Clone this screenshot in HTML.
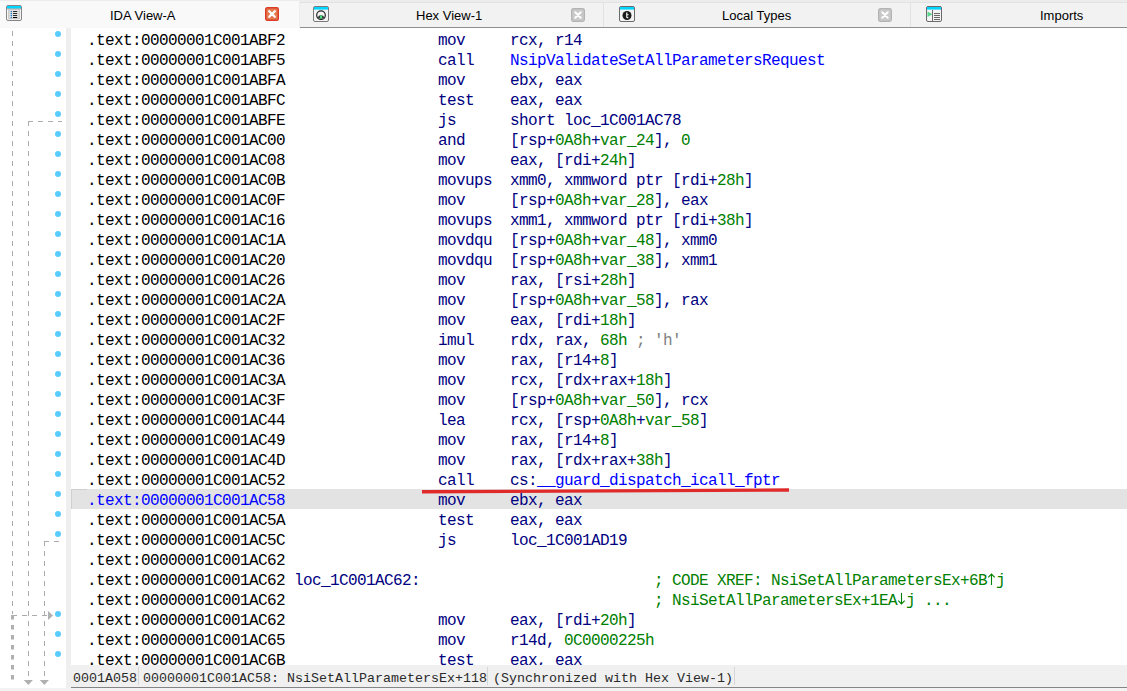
<!DOCTYPE html>
<html><head><meta charset="utf-8">
<style>
html,body{margin:0;padding:0;}
body{width:1127px;height:691px;position:relative;overflow:hidden;background:#fff;font-family:"Liberation Sans",sans-serif;}
.abs{position:absolute;}
#tabbar{position:absolute;left:0;top:0;width:1127px;height:28px;background:#ececec;}
.tab{position:absolute;top:2px;height:24px;background:#f2f2f2;border-top:1px solid #e2e2e2;border-bottom:1px solid #fafafa;}
.tab.sep{border-left:1px solid #e2e2e2;}
#tabline{position:absolute;left:0;top:27px;width:1127px;height:1px;background:#8e8e8e;}
#acttab{position:absolute;left:0;top:1px;width:299px;height:27px;background:#f9f9f9;border-right:1px solid #ededed;}
.tl{position:absolute;top:8px;font-size:13px;color:#000;line-height:16px;white-space:nowrap;}
#gutter{position:absolute;left:0;top:28px;width:66px;height:660px;background:#fff;}
#strip{position:absolute;left:66px;top:28px;width:5px;height:660px;background:#efefef;}
#code{position:absolute;left:71px;top:0;width:1056px;height:665px;overflow:hidden;}
.row{position:absolute;left:0;width:1056px;height:20px;font-family:"Liberation Mono",monospace;font-size:16px;letter-spacing:-0.6px;line-height:20px;white-space:pre;}
.row span{position:absolute;top:2px;}
.row.hl{background:#e3e3e3;box-shadow:inset 1px 0 0 #cfcfcf;}
.row.hl::before{content:"";position:absolute;left:0;top:0;width:16px;height:1px;background:#cfcfcf;}
.ad{color:#000;}
.hl .ad{color:#0000ff;}
.mn,.op,.lb{color:#000080;}
.row span.g,.row .op span.g{color:#008000;position:static;}
.row .op span.b{color:#0000ff;position:static;}
.row .op span.y{color:#808080;position:static;}
.row > span.g{position:absolute;}
.dot{position:absolute;left:55px;width:6px;height:6px;border-radius:50%;background:#5acbfd;}
#status{position:absolute;left:71px;top:665px;width:1056px;height:22px;background:#f0f0f0;border-bottom:1px solid #858585;font-family:"Liberation Mono",monospace;font-size:13.33px;color:#2a2a2a;}
#status span{position:absolute;top:5.5px;line-height:16px;white-space:pre;}
.ssep{position:absolute;top:2px;width:1px;height:18px;background:#d6d6d6;}
#bottom{position:absolute;left:0;top:688px;width:1127px;height:3px;background:#f3f3f3;}
#redline{position:absolute;left:422px;top:488px;width:368px;height:6px;}
</style></head><body>
<div id="tabbar">
  <div class="tab" style="left:299px;width:305px;"></div>
  <div class="tab sep" style="left:603px;width:307px;"></div>
  <div class="tab sep" style="left:910px;width:217px;"></div>
  <div id="tabline"></div>
  <div id="acttab"></div>
  <!-- tab1 icon -->
  <svg class="abs" style="left:6px;top:5px" width="16" height="16" viewBox="0 0 16 16">
    <rect x="0.5" y="0.5" width="15" height="15" rx="1.5" fill="#f6f6f6" stroke="#868686"/>
    <rect x="1" y="1" width="14" height="2.6" fill="#00d6ff"/>
    <rect x="1" y="3.6" width="14" height="0.6" fill="#8a8a8a"/>
    <rect x="2.3" y="4" width="11.5" height="10.2" fill="#bdbdbd"/>
    <rect x="3.3" y="4.8" width="9.5" height="8.6" fill="#e4e4e4"/>
    <g fill="#1b78c4"><circle cx="5.3" cy="6.5" r="0.8"/><circle cx="5.3" cy="8.5" r="0.8"/><circle cx="5.3" cy="10.5" r="0.8"/><circle cx="5.3" cy="12.5" r="0.8"/></g>
    <g fill="#2a2a2a"><rect x="7" y="6" width="4.2" height="1"/><rect x="7" y="8" width="4.2" height="1"/><rect x="7" y="10" width="4.2" height="1"/><rect x="7" y="12" width="4.2" height="1" fill="#000"/></g>
  </svg>
  <div class="tl" style="left:110px;">IDA View-A</div>
  <svg class="abs" style="left:265px;top:7px" width="14" height="14" viewBox="0 0 14 14">
    <rect x="0.7" y="0.7" width="12.6" height="12.6" rx="1.5" fill="#e57a50" stroke="#dc3a26" stroke-width="1.4"/>
    <path d="M4.2 4.2 L9.8 9.8 M9.8 4.2 L4.2 9.8" stroke="#fff" stroke-width="2.2" stroke-linecap="round"/>
  </svg>
  <!-- tab2 icon hex -->
  <svg class="abs" style="left:313px;top:6px" width="16" height="16" viewBox="0 0 16 16">
    <rect x="0.5" y="0.5" width="15" height="15" rx="1.5" fill="#f4f4f4" stroke="#7a7a7a"/>
    <rect x="1" y="1" width="14" height="2.6" fill="#00d4ff"/>
    <circle cx="8" cy="9.2" r="4.3" fill="none" stroke="#222" stroke-width="1.2"/>
    <path d="M4.8 11.2 Q8 14.5 11.2 11.2 L10 9.8 Q8 8.5 6 9.8 Z" fill="#222"/>
    <ellipse cx="8" cy="11" rx="1.3" ry="1.8" fill="#3ee07a"/>
  </svg>
  <div class="tl" style="left:416px;">Hex View-1</div>
  <svg class="abs" style="left:571px;top:8px" width="14" height="14" viewBox="0 0 14 14">
    <rect x="0.6" y="0.6" width="12.8" height="12.8" rx="1.8" fill="#c9c9c9" stroke="#b3b3b3" stroke-width="1.2"/>
    <path d="M4.3 4.3 L9.7 9.7 M9.7 4.3 L4.3 9.7" stroke="#fff" stroke-width="2" stroke-linecap="round"/>
  </svg>
  <!-- tab3 icon local types -->
  <svg class="abs" style="left:619px;top:6px" width="16" height="16" viewBox="0 0 16 16">
    <rect x="0.5" y="0.5" width="15" height="15" rx="1.5" fill="#f4f4f4" stroke="#6a6a6a"/>
    <rect x="1" y="1" width="14" height="2.6" fill="#00d4ff"/>
    <circle cx="8" cy="9.5" r="4.5" fill="#1a1a1a"/>
    <path d="M7.2 6.6 L8.4 6.6 L8.3 8.2 L9.6 8.2 L9.5 9.2 L8.3 9.2 L8.3 10.8 Q8.4 11.4 9.5 11.2 L9.4 12.2 Q7.2 12.6 7.2 11 Z" fill="#fff"/>
  </svg>
  <div class="tl" style="left:722px;">Local Types</div>
  <svg class="abs" style="left:878px;top:8px" width="14" height="14" viewBox="0 0 14 14">
    <rect x="0.6" y="0.6" width="12.8" height="12.8" rx="1.8" fill="#c9c9c9" stroke="#b3b3b3" stroke-width="1.2"/>
    <path d="M4.3 4.3 L9.7 9.7 M9.7 4.3 L4.3 9.7" stroke="#fff" stroke-width="2" stroke-linecap="round"/>
  </svg>
  <!-- tab4 icon imports -->
  <svg class="abs" style="left:926px;top:6px" width="16" height="16" viewBox="0 0 16 16">
    <rect x="0.5" y="0.5" width="15" height="15" rx="1.5" fill="#f4f4f4" stroke="#6a6a6a"/>
    <rect x="1" y="1" width="14" height="2.6" fill="#00d4ff"/>
    <rect x="6" y="4" width="1" height="11" fill="#6a6a6a"/>
    <path d="M1.5 5.5 L6.5 8.2 L1.5 11 Z" fill="#58d68d"/>
    <rect x="8" y="7" width="6" height="1" fill="#666"/>
    <rect x="8" y="9" width="6" height="1" fill="#666"/>
    <rect x="8" y="11" width="6" height="1" fill="#666"/>
    <rect x="8" y="13" width="6" height="1" fill="#666"/>
  </svg>
  <div class="tl" style="left:1040px;">Imports</div>
</div>
<div id="gutter"></div>
<svg class="abs" style="left:0;top:0" width="66" height="691">
  <g stroke="#ababab" stroke-width="1" fill="none" stroke-dasharray="5 5">
    <line x1="12.5" y1="31" x2="12.5" y2="614"/>
    <line x1="28.5" y1="121" x2="28.5" y2="678"/>
    <line x1="28" y1="121.5" x2="62" y2="121.5"/>
    <line x1="44.5" y1="541" x2="44.5" y2="678"/>
    <line x1="44" y1="541.5" x2="59" y2="541.5"/>
    <line x1="12" y1="615.5" x2="48" y2="615.5"/>
  </g>
  <line x1="12.5" y1="615" x2="12.5" y2="681" stroke="#b0b0b0" stroke-width="3" stroke-dasharray="4.6 5.4"/>
  <path d="M48 611 L53 615.5 L48 620 Z" fill="#b0b0b0"/>
  <path d="M23.8 680 L32.9 680 L28.35 685 Z" fill="#b0b0b0"/>
  <path d="M39.8 680 L48.9 680 L44.35 685 Z" fill="#b0b0b0"/>
</svg>
<div class="dot" style="top:31px"></div><div class="dot" style="top:51px"></div><div class="dot" style="top:71px"></div><div class="dot" style="top:91px"></div><div class="dot" style="top:111px"></div><div class="dot" style="top:131px"></div><div class="dot" style="top:151px"></div><div class="dot" style="top:171px"></div><div class="dot" style="top:191px"></div><div class="dot" style="top:211px"></div><div class="dot" style="top:231px"></div><div class="dot" style="top:251px"></div><div class="dot" style="top:271px"></div><div class="dot" style="top:291px"></div><div class="dot" style="top:311px"></div><div class="dot" style="top:331px"></div><div class="dot" style="top:351px"></div><div class="dot" style="top:371px"></div><div class="dot" style="top:391px"></div><div class="dot" style="top:411px"></div><div class="dot" style="top:431px"></div><div class="dot" style="top:451px"></div><div class="dot" style="top:471px"></div><div class="dot" style="top:491px"></div><div class="dot" style="top:511px"></div><div class="dot" style="top:531px"></div><div class="dot" style="top:611px"></div><div class="dot" style="top:631px"></div><div class="dot" style="top:651px"></div>
<div id="strip"></div>
<div id="code">
<div class="row" style="top:29px"><span class="ad" style="left:16px">.text:00000001C001ABF2</span><span class="mn" style="left:367px">mov</span><span class="op" style="left:439px">rcx, r14</span></div>
<div class="row" style="top:49px"><span class="ad" style="left:16px">.text:00000001C001ABF5</span><span class="mn" style="left:367px">call</span><span class="op" style="left:439px"><span class="b">NsipValidateSetAllParametersRequest</span></span></div>
<div class="row" style="top:69px"><span class="ad" style="left:16px">.text:00000001C001ABFA</span><span class="mn" style="left:367px">mov</span><span class="op" style="left:439px">ebx, eax</span></div>
<div class="row" style="top:89px"><span class="ad" style="left:16px">.text:00000001C001ABFC</span><span class="mn" style="left:367px">test</span><span class="op" style="left:439px">eax, eax</span></div>
<div class="row" style="top:109px"><span class="ad" style="left:16px">.text:00000001C001ABFE</span><span class="mn" style="left:367px">js</span><span class="op" style="left:439px">short loc_1C001AC78</span></div>
<div class="row" style="top:129px"><span class="ad" style="left:16px">.text:00000001C001AC00</span><span class="mn" style="left:367px">and</span><span class="op" style="left:439px">[rsp+<span class="g">0A8h</span>+<span class="g">var_24</span>], <span class="g">0</span></span></div>
<div class="row" style="top:149px"><span class="ad" style="left:16px">.text:00000001C001AC08</span><span class="mn" style="left:367px">mov</span><span class="op" style="left:439px">eax, [rdi+<span class="g">24h</span>]</span></div>
<div class="row" style="top:169px"><span class="ad" style="left:16px">.text:00000001C001AC0B</span><span class="mn" style="left:367px">movups</span><span class="op" style="left:439px">xmm0, xmmword ptr [rdi+<span class="g">28h</span>]</span></div>
<div class="row" style="top:189px"><span class="ad" style="left:16px">.text:00000001C001AC0F</span><span class="mn" style="left:367px">mov</span><span class="op" style="left:439px">[rsp+<span class="g">0A8h</span>+<span class="g">var_28</span>], eax</span></div>
<div class="row" style="top:209px"><span class="ad" style="left:16px">.text:00000001C001AC16</span><span class="mn" style="left:367px">movups</span><span class="op" style="left:439px">xmm1, xmmword ptr [rdi+<span class="g">38h</span>]</span></div>
<div class="row" style="top:229px"><span class="ad" style="left:16px">.text:00000001C001AC1A</span><span class="mn" style="left:367px">movdqu</span><span class="op" style="left:439px">[rsp+<span class="g">0A8h</span>+<span class="g">var_48</span>], xmm0</span></div>
<div class="row" style="top:249px"><span class="ad" style="left:16px">.text:00000001C001AC20</span><span class="mn" style="left:367px">movdqu</span><span class="op" style="left:439px">[rsp+<span class="g">0A8h</span>+<span class="g">var_38</span>], xmm1</span></div>
<div class="row" style="top:269px"><span class="ad" style="left:16px">.text:00000001C001AC26</span><span class="mn" style="left:367px">mov</span><span class="op" style="left:439px">rax, [rsi+<span class="g">28h</span>]</span></div>
<div class="row" style="top:289px"><span class="ad" style="left:16px">.text:00000001C001AC2A</span><span class="mn" style="left:367px">mov</span><span class="op" style="left:439px">[rsp+<span class="g">0A8h</span>+<span class="g">var_58</span>], rax</span></div>
<div class="row" style="top:309px"><span class="ad" style="left:16px">.text:00000001C001AC2F</span><span class="mn" style="left:367px">mov</span><span class="op" style="left:439px">eax, [rdi+<span class="g">18h</span>]</span></div>
<div class="row" style="top:329px"><span class="ad" style="left:16px">.text:00000001C001AC32</span><span class="mn" style="left:367px">imul</span><span class="op" style="left:439px">rdx, rax, <span class="g">68h</span> <span class="y">; 'h'</span></span></div>
<div class="row" style="top:349px"><span class="ad" style="left:16px">.text:00000001C001AC36</span><span class="mn" style="left:367px">mov</span><span class="op" style="left:439px">rax, [r14+<span class="g">8</span>]</span></div>
<div class="row" style="top:369px"><span class="ad" style="left:16px">.text:00000001C001AC3A</span><span class="mn" style="left:367px">mov</span><span class="op" style="left:439px">rcx, [rdx+rax+<span class="g">18h</span>]</span></div>
<div class="row" style="top:389px"><span class="ad" style="left:16px">.text:00000001C001AC3F</span><span class="mn" style="left:367px">mov</span><span class="op" style="left:439px">[rsp+<span class="g">0A8h</span>+<span class="g">var_50</span>], rcx</span></div>
<div class="row" style="top:409px"><span class="ad" style="left:16px">.text:00000001C001AC44</span><span class="mn" style="left:367px">lea</span><span class="op" style="left:439px">rcx, [rsp+<span class="g">0A8h</span>+<span class="g">var_58</span>]</span></div>
<div class="row" style="top:429px"><span class="ad" style="left:16px">.text:00000001C001AC49</span><span class="mn" style="left:367px">mov</span><span class="op" style="left:439px">rax, [r14+<span class="g">8</span>]</span></div>
<div class="row" style="top:449px"><span class="ad" style="left:16px">.text:00000001C001AC4D</span><span class="mn" style="left:367px">mov</span><span class="op" style="left:439px">rax, [rdx+rax+<span class="g">38h</span>]</span></div>
<div class="row" style="top:469px"><span class="ad" style="left:16px">.text:00000001C001AC52</span><span class="mn" style="left:367px">call</span><span class="op" style="left:439px">cs:<span class="b">__guard_dispatch_icall_fptr</span></span></div>
<div class="row hl" style="top:489px"><span class="ad" style="left:16px">.text:00000001C001AC58</span><span class="mn" style="left:367px">mov</span><span class="op" style="left:439px">ebx, eax</span></div>
<div class="row" style="top:509px"><span class="ad" style="left:16px">.text:00000001C001AC5A</span><span class="mn" style="left:367px">test</span><span class="op" style="left:439px">eax, eax</span></div>
<div class="row" style="top:529px"><span class="ad" style="left:16px">.text:00000001C001AC5C</span><span class="mn" style="left:367px">js</span><span class="op" style="left:439px">loc_1C001AD19</span></div>
<div class="row" style="top:549px"><span class="ad" style="left:16px">.text:00000001C001AC62</span></div>
<div class="row" style="top:569px"><span class="ad" style="left:16px">.text:00000001C001AC62</span><span class="lb" style="left:223px">loc_1C001AC62:</span><span class="g" style="left:583px">; CODE XREF: NsiSetAllParametersEx+6B<svg width='9' height='12' style='vertical-align:baseline'><path d='M4.5 1 V12 M1.3 4.3 L4.5 1 L7.7 4.3' stroke='#008000' fill='none' stroke-width='1.1'/></svg>j</span></div>
<div class="row" style="top:589px"><span class="ad" style="left:16px">.text:00000001C001AC62</span><span class="g" style="left:583px">; NsiSetAllParametersEx+1EA<svg width='9' height='12' style='vertical-align:baseline'><path d='M4.5 0 V11 M1.3 7.7 L4.5 11 L7.7 7.7' stroke='#008000' fill='none' stroke-width='1.1'/></svg>j ...</span></div>
<div class="row" style="top:609px"><span class="ad" style="left:16px">.text:00000001C001AC62</span><span class="mn" style="left:367px">mov</span><span class="op" style="left:439px">eax, [rdi+<span class="g">20h</span>]</span></div>
<div class="row" style="top:629px"><span class="ad" style="left:16px">.text:00000001C001AC65</span><span class="mn" style="left:367px">mov</span><span class="op" style="left:439px">r14d, <span class="g">0C0000225h</span></span></div>
<div class="row" style="top:649px"><span class="ad" style="left:16px">.text:00000001C001AC6B</span><span class="mn" style="left:367px">test</span><span class="op" style="left:439px">eax, eax</span></div>
</div>
<svg id="redline" viewBox="0 0 368 6"><path d="M0 3.8 L367 2" stroke="#e02a2a" stroke-width="3.4"/></svg>
<div id="status">
  <span style="left:2px">0001A058</span>
  <div class="ssep" style="left:67px"></div>
  <span style="left:72px">00000001C001AC58: NsiSetAllParametersEx+118</span>
  <div class="ssep" style="left:416px"></div>
  <span style="left:422px">(Synchronized with Hex View-1)</span>
  <div class="ssep" style="left:663px"></div>
</div>
<div id="bottom"></div>
</body></html>
